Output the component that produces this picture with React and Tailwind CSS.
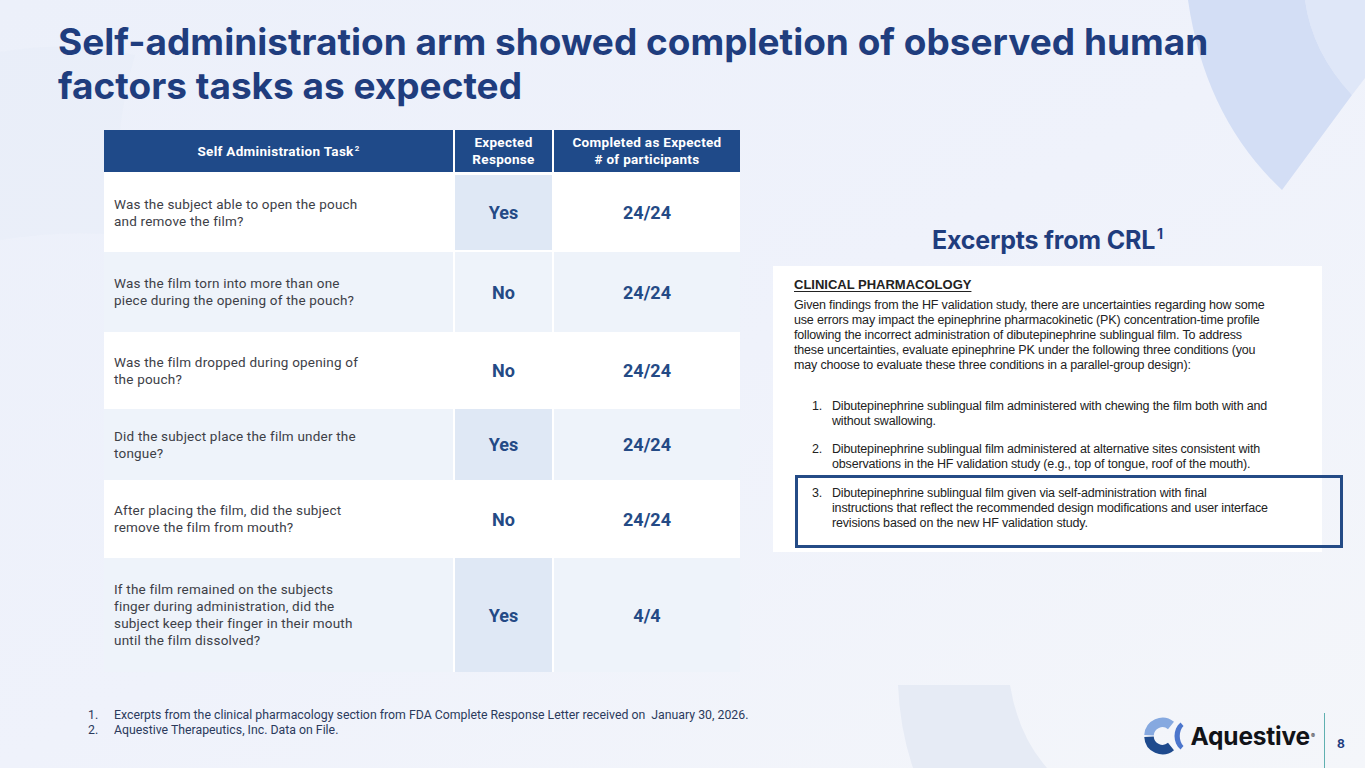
import React from 'react';

const rows = [
	{ task: ['Was the subject able to open the pouch', 'and remove the film?'], expected: 'Yes', done: '24/24', h: 'h-[75px]', shade: false },
	{ task: ['Was the film torn into more than one', 'piece during the opening of the pouch?'], expected: 'No', done: '24/24', h: 'h-[80px]', shade: true },
	{ task: ['Was the film dropped during opening of', 'the pouch?'], expected: 'No', done: '24/24', h: 'h-[73px]', shade: false },
	{ task: ['Did the subject place the film under the', 'tongue?'], expected: 'Yes', done: '24/24', h: 'h-[71px]', shade: true },
	{ task: ['After placing the film, did the subject', 'remove the film from mouth?'], expected: 'No', done: '24/24', h: 'h-[74px]', shade: false },
	{
		task: [
			'If the film remained on the subjects',
			'finger during administration, did the',
			'subject keep their finger in their mouth',
			'until the film dissolved?',
		],
		expected: 'Yes',
		done: '4/4',
		h: 'h-[114px]',
		shade: true,
	},
];

const Lines = ({ lines }) => lines.map((l) => <span key={l} className="block">{l}</span>);

const Backdrop = () => (
	<svg className="absolute inset-0 pointer-events-none" width="1365" height="768" viewBox="0 0 1365 768">
		<path d="M0 52 Q70 40 135 55 Q110 140 120 235 Q60 230 0 240 Z" fill="#e7ecf7" opacity="0.55" />
		<path d="M1305 0 Q1312 52 1352 95 L1365 78 L1365 0 Z" fill="#dfe7f8" />
		<path d="M1188 0 Q1205 118 1282 190 L1352 95 Q1312 52 1305 0 Z" fill="#d3def5" />
		<path d="M898 685 L1010 685 Q1018 735 1047 768 L913 768 Q900 730 898 685 Z" fill="#e6ebf5" />
	</svg>
);

const Logo = () => (
	<div className="flex items-center">
		<svg width="40" height="40" viewBox="0 0 40 40" className="mr-[7px]">
			<path d="M5 19.3 A13.5 13.5 0 0 1 27 9.5" fill="none" stroke="#86a9e0" strokeWidth="9.5" />
			<path d="M5 20.7 A13.5 13.5 0 0 0 27 30.5" fill="none" stroke="#1e4a8d" strokeWidth="9.5" />
			<path d="M36.5 6.5 C28.5 13 28.5 27 36.5 33.5 L39.5 30 C34.5 25 34.5 15 39.5 10 Z" fill="#4c76cc" />
		</svg>
		<span className="text-[24.5px] font-bold tracking-[-0.2px] text-[#111318] font-['Inter',sans-serif] leading-none">
			Aquestive
		</span>
		<span className="text-[6px] text-[#111318] self-start mt-[15px] ml-[1px] font-['Inter',sans-serif]">®</span>
	</div>
);

export default function App() {
	return (
		<div className="relative w-[1365px] h-[768px] overflow-hidden bg-gradient-to-br from-[#ecf0fa] via-[#eff2fb] to-[#f4f6fa]">
			<Backdrop />
			<div className="relative flex flex-col h-full">
				<h1 className="pt-[20px] pl-[58px] text-[37px] leading-[44px] font-bold text-[#1f3d7e] font-['Inter',sans-serif]">
					Self-administration arm showed completion of observed human
					<br />
					factors tasks as expected
				</h1>

				<div className="flex mt-[22px]">
					{/* table */}
					<div className="ml-[104px] w-[636px] bg-white font-['Roboto',sans-serif]">
						<div className="grid grid-cols-[349px_97px_186px] gap-x-[2px] h-[42px] text-white font-bold text-[13.5px] tracking-[0.3px] leading-[17px] text-center">
							<div className="bg-[#1f4a89] flex items-center justify-center">
								<span>
									Self Administration Task<sup className="text-[8px] ml-[1px] relative -top-[5px]">2</sup>
								</span>
							</div>
							<div className="bg-[#1f4a89] flex items-center justify-center">
								<span>
									Expected
									<br />
									Response
								</span>
							</div>
							<div className="bg-[#1f4a89] flex items-center justify-center">
								<span>
									Completed as Expected
									<br /># of participants
								</span>
							</div>
						</div>
						<div className="flex flex-col gap-y-[2px] pt-[3px]">
							{rows.map((r) => (
								<div key={r.task[0]} className={`grid grid-cols-[349px_97px_186px] gap-x-[2px] ${r.h}`}>
									<div
										className={`flex items-center pl-[10px] text-[13.5px] tracking-[0.2px] leading-[17px] text-[#3d4047] ${
											r.shade ? 'bg-[#eef3fa]' : 'bg-white'
										}`}
									>
										<div>
											<Lines lines={r.task} />
										</div>
									</div>
									<div
										className={`flex items-center justify-center text-[18px] font-bold text-[#244a85] ${
											r.expected === 'Yes' ? 'bg-[#dfe8f5]' : r.shade ? 'bg-[#eef3fa]' : 'bg-white'
										}`}
									>
										{r.expected}
									</div>
									<div
										className={`flex items-center justify-center text-[18px] font-bold text-[#244a85] ${
											r.shade ? 'bg-[#eef3fa]' : 'bg-white'
										}`}
									>
										{r.done}
									</div>
								</div>
							))}
						</div>
					</div>

					{/* excerpts */}
					<div className="ml-[33px] w-[549px] flex flex-col">
						<h2 className="mt-[95px] mb-[11px] text-center text-[25px] leading-[30px] font-bold text-[#1f3d7e] font-['Inter',sans-serif] tracking-[-0.2px]">
							Excerpts from CRL<sup className="text-[14px] relative -top-[10px] ml-[2px]">1</sup>
						</h2>
						<div className="bg-white pt-[11px] pl-[21px] pb-[4px] text-[12.5px] tracking-[-0.17px] leading-[15px] text-[#222] font-['Liberation_Sans',Arial,sans-serif]">
							<div className="font-bold text-[13px] tracking-normal underline underline-offset-[2px]">CLINICAL PHARMACOLOGY</div>
							<p className="mt-[6px]">
								<Lines
									lines={[
										'Given findings from the HF validation study, there are uncertainties regarding how some',
										'use errors may impact the epinephrine pharmacokinetic (PK) concentration-time profile',
										'following the incorrect administration of dibutepinephrine sublingual film. To address',
										'these uncertainties, evaluate epinephrine PK under the following three conditions (you',
										'may choose to evaluate these three conditions in a parallel-group design):',
									]}
								/>
							</p>
							<div className="mt-[26px] ml-[18px] flex">
								<span className="w-[20px]">1.</span>
								<div>
									<Lines
										lines={[
											'Dibutepinephrine sublingual film administered with chewing the film both with and',
											'without swallowing.',
										]}
									/>
								</div>
							</div>
							<div className="mt-[13px] ml-[18px] flex">
								<span className="w-[20px]">2.</span>
								<div>
									<Lines
										lines={[
											'Dibutepinephrine sublingual film administered at alternative sites consistent with',
											'observations in the HF validation study (e.g., top of tongue, roof of the mouth).',
										]}
									/>
								</div>
							</div>
							<div className="mt-[3px] ml-[1px] mr-[-21px] border-[3px] border-[#244b86] pt-[8px] pb-[14px] pl-[14px] flex">
								<span className="w-[20px]">3.</span>
								<div>
									<Lines
										lines={[
											'Dibutepinephrine sublingual film given via self-administration with final',
											'instructions that reflect the recommended design modifications and user interface',
											'revisions based on the new HF validation study.',
										]}
									/>
								</div>
							</div>
						</div>
					</div>
				</div>

				{/* footer */}
				<div className="mt-auto flex items-end justify-between">
					<div className="pl-[88px] mb-[30px] text-[12.3px] leading-[15px] text-[#2b3a5c] font-['Roboto',sans-serif]">
						<div className="flex">
							<span className="w-[26px]">1.</span>
							<span>Excerpts from the clinical pharmacology section from FDA Complete Response Letter received on&nbsp; January 30, 2026.</span>
						</div>
						<div className="flex">
							<span className="w-[26px]">2.</span>
							<span>Aquestive Therapeutics, Inc. Data on File.</span>
						</div>
					</div>
					<div className="flex items-stretch">
						<div className="mb-[12px] self-end">
							<Logo />
						</div>
						<div className="ml-[9px] w-[1px] h-[55px] bg-[#5fb0b0]" />
						<div className="w-[40px] pl-[12px] self-center pt-[6px] text-[12px] font-bold text-[#1f3d7e] font-['Inter',sans-serif]">
							8
						</div>
					</div>
				</div>
			</div>
		</div>
	);
}
